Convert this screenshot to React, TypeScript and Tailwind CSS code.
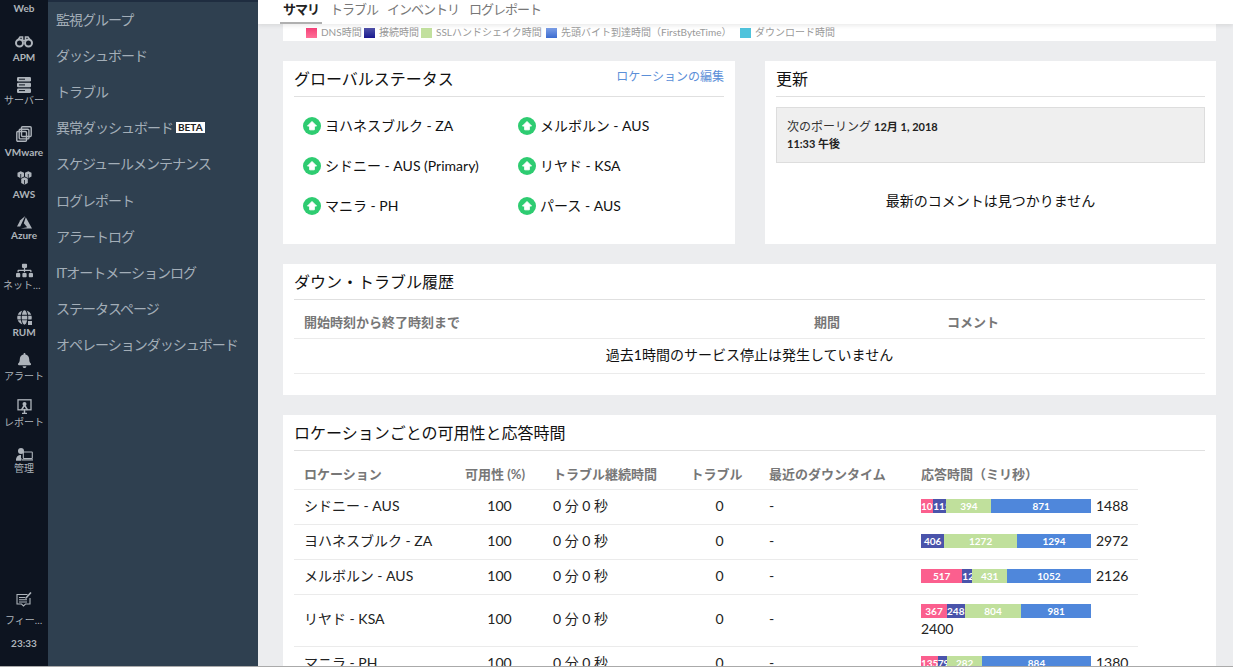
import { FaBell, FaGlobe, FaSitemap } from "react-icons/fa";

const font = "font-['Lato','Noto_Sans_CJK_JP',sans-serif]";

const ApmIcon = () => (
  <svg width="18" height="12" viewBox="0 0 18 12" fill="none" stroke="currentColor">
    <circle cx="4.500" cy="7" r="3.500" strokeWidth="2" />
    <circle cx="13.500" cy="7" r="3.500" strokeWidth="2" />
    <path d="M3 4 5 1H7.500V5M15 4 13 1H10.500V5M7.500 4.500H10.500" strokeWidth="1.600" />
  </svg>
);

const ServerIcon = () => (
  <svg width="14" height="16" viewBox="0 0 14 16" fill="currentColor">
    <rect x="0" y="0" width="14" height="4.500" rx="1.200" />
    <rect x="0" y="5.700" width="14" height="4.500" rx="1.200" />
    <rect x="0" y="11.400" width="14" height="4.500" rx="1.200" />
    <rect x="2" y="1.700" width="6" height="1" fill="#0d1420" />
    <rect x="2" y="7.400" width="6" height="1" fill="#0d1420" />
    <rect x="2" y="13.100" width="6" height="1" fill="#0d1420" />
  </svg>
);

const VmwareIcon = () => (
  <svg width="16" height="16" viewBox="0 0 16 16" fill="none" stroke="currentColor" strokeWidth="1.400">
    <rect x="5.500" y="0.800" width="9.700" height="9.700" rx="1" />
    <rect x="3.200" y="3.200" width="9.700" height="9.700" rx="1" />
    <rect x="0.800" y="5.500" width="9.700" height="9.700" rx="1" />
  </svg>
);

const AwsIcon = () => (
  <svg width="15" height="14" viewBox="0 0 15 14" fill="currentColor">
    <path d="M0.500 1.800 3.700 0.200 7 1.800V5.600L3.700 7.200 0.500 5.600Z" />
    <path d="M8 1.800 11.300 0.200 14.500 1.800V5.600L11.300 7.200 8 5.600Z" />
    <path d="M4.200 7.800 7.500 6.200 10.800 7.800V12L7.500 13.800 4.200 12Z" />
    <path d="M3.700 3V7M11.300 3V7M7.500 9V13.500" stroke="#0d1420" strokeWidth="0.800" />
  </svg>
);

const AzureIcon = () => (
  <svg width="15" height="13" viewBox="0 0 15 13" fill="currentColor">
    <path d="M8.200 0 3.300 4.300 0 10.500H3.200Z" />
    <path d="M8.800 1.200 15 12.500H3.800L10.200 11.300 6.800 7.300Z" />
  </svg>
);

const ReportIcon = () => (
  <svg width="15" height="15" viewBox="0 0 15 15" fill="none" stroke="currentColor">
    <rect x="1" y="0.800" width="13" height="10" strokeWidth="1.300" />
    <circle cx="7.500" cy="5" r="2" fill="currentColor" stroke="none" />
    <path d="M4.500 11 7.500 6 10.500 11M7.500 10V14M5 14.500H10" strokeWidth="1.500" />
  </svg>
);

const AdminIcon = () => (
  <svg width="17" height="13" viewBox="0 0 17 13" fill="currentColor">
    <circle cx="5" cy="3" r="3" />
    <path d="M0 12.500C0 8.500 2 7 5 7V12.500Z" />
    <path d="M3.500 10H5.500V12.500H0V11Z" />
    <rect x="7.300" y="4" width="9" height="6.500" rx="0.500" fill="none" stroke="currentColor" strokeWidth="1.100" />
    <rect x="6" y="11.300" width="11" height="1.200" />
  </svg>
);

const FeedbackIcon = () => (
  <svg width="16" height="16" viewBox="0 0 16 16" fill="none" stroke="currentColor" strokeWidth="1.100">
    <path d="M11.500 2.500H1V12H5.500L7.500 14 9.500 12H14V6" />
    <path d="M3 5.500H9M3 7.800H11M3 10H11" />
    <path d="M9.500 6.500 15 0.500" strokeWidth="1.600" />
  </svg>
);

const RumIcon = () => (
  <div className="relative">
    <FaGlobe size={15} />
    <span className="absolute -right-[1px] -bottom-[1px] w-[6px] h-[6px] bg-[#aeb4bb] border border-[#0d1420]" />
  </div>
);

const railItems = [
  { label: "APM", bold: true, top: "mt-[20px]", gap: "mt-0", icon: <ApmIcon /> },
  { label: "サーバー", bold: false, top: "mt-[13px]", gap: "mt-0", icon: <ServerIcon /> },
  { label: "VMware", bold: true, top: "mt-[19px]", gap: "mt-[3px]", icon: <VmwareIcon /> },
  { label: "AWS", bold: true, top: "mt-[11px]", gap: "mt-[1px]", icon: <AwsIcon /> },
  { label: "Azure", bold: true, top: "mt-[13px]", gap: "-mt-[2px]", icon: <AzureIcon /> },
  { label: "ネットワーク", bold: false, top: "mt-[20px]", gap: "mt-0", icon: <FaSitemap size={17} /> },
  { label: "RUM", bold: true, top: "mt-[17px]", gap: "mt-0", icon: <RumIcon /> },
  { label: "アラート", bold: false, top: "mt-[13px]", gap: "mt-[1px]", icon: <FaBell size={15} /> },
  { label: "レポート", bold: false, top: "mt-[15px]", gap: "mt-[1px]", icon: <ReportIcon /> },
  { label: "管理", bold: false, top: "mt-[17px]", gap: "-mt-[1px]", icon: <AdminIcon /> },
];

const subNav = [
  "監視グループ",
  "ダッシュボード",
  "トラブル",
  "異常ダッシュボード",
  "スケジュールメンテナンス",
  "ログレポート",
  "アラートログ",
  "ITオートメーションログ",
  "ステータスページ",
  "オペレーションダッシュボード",
];

const legend = [
  { color: "bg-gradient-to-b from-[#f43f78] to-[#ff6f98]", label: "DNS時間", box: "w-[58px]" },
  { color: "bg-gradient-to-b from-[#5050a8] to-[#1c1690]", label: "接続時間", box: "w-[57px]" },
  { color: "bg-[#c2e09e]", label: "SSLハンドシェイク時間", box: "w-[125px]" },
  { color: "bg-gradient-to-b from-[#7c9ee6] to-[#3c6cd0]", label: "先頭バイト到達時間（FirstByteTime）", box: "w-[194px]" },
  { color: "bg-[#4fc3dc]", label: "ダウンロード時間", box: "w-[95px]" },
];

const statuses = [
  "ヨハネスブルク - ZA",
  "メルボルン - AUS",
  "シドニー - AUS (Primary)",
  "リヤド - KSA",
  "マニラ - PH",
  "パース - AUS",
];

const rows = [
  { name: "シドニー - AUS", parts: [107, 115, 394, 871], total: 1488, wrap: false },
  { name: "ヨハネスブルク - ZA", parts: [0, 406, 1272, 1294], total: 2972, wrap: false },
  { name: "メルボルン - AUS", parts: [517, 126, 431, 1052], total: 2126, wrap: false },
  { name: "リヤド - KSA", parts: [367, 248, 804, 981], total: 2400, wrap: true },
  { name: "マニラ - PH", parts: [135, 79, 282, 884], total: 1380, wrap: false },
];

const barColors = ["bg-[#fb5f8e]", "bg-[#4a54ab]", "bg-[#c0e09c]", "bg-[#4f87db]"];
const columns = "grid grid-cols-[162px_87px_137px_79px_152px_227px] items-center";

function UpIcon() {
  return (
    <svg width="18" height="18" viewBox="0 0 18 18" className="shrink-0">
      <circle cx="9" cy="9" r="9" fill="#2ecc71" />
      <path d="M9 4.500 13.500 9H11.300V12.800H6.700V9H4.500Z" fill="#fff" stroke="#fff" strokeLinejoin="round" />
    </svg>
  );
}

function CardTitle({ children }: { children: React.ReactNode }) {
  return <h2 className="text-[16px] leading-[35px] h-[36px] text-[#111] border-b border-[#e0e0e0]">{children}</h2>;
}

function Rail() {
  return (
    <aside className="w-12 shrink-0 bg-[#0d1420] text-[#aeb4bb] flex flex-col items-center overflow-hidden">
      <div className="text-[10px] font-bold leading-[12px] mt-[2px]">Web</div>
      {railItems.map((item) => (
        <div key={item.label} className={`${item.top} flex flex-col items-center w-full`}>
          <div className="h-[16px] flex items-center justify-center">{item.icon}</div>
          <div className={`w-[42px] text-center truncate leading-[14px] text-[10px] ${item.gap} ${item.bold ? "font-bold" : ""}`}>
            {item.label}
          </div>
        </div>
      ))}
      <div className="mt-auto flex flex-col items-center w-full pb-[17px]">
        <FeedbackIcon />
        <div className="w-[38px] text-center truncate text-[10px] leading-[14px] mt-[5px]">フィードバック</div>
        <div className="text-[10px] font-bold leading-[12px] mt-[10px]">23:33</div>
      </div>
    </aside>
  );
}

function SubNav() {
  return (
    <nav className="w-[210px] shrink-0 bg-[#2f4050] text-[#a3aeb8]">
      <div className="h-[2px] bg-[#1f2d40]" />
      <ul className="pl-2 -mt-[0.500px]">
        {subNav.map((item) => (
          <li key={item} className="h-[36.100px] flex items-center text-[14px] tracking-[-1px] whitespace-nowrap">
            {item}
            {item === "異常ダッシュボード" && (
              <span className="ml-[3px] bg-white text-[#222] text-[10px] font-bold px-[2px] leading-[11px] tracking-normal">
                BETA
              </span>
            )}
          </li>
        ))}
      </ul>
    </nav>
  );
}

function Tabs() {
  return (
    <div className="h-6 shrink-0 bg-white shadow-[0_2px_4px_rgba(0,0,0,0.08)] relative z-10 flex pl-[22px] text-[13px] tracking-[-1px] text-[#777]">
      <div className="h-6 w-[42px] border-b-2 border-[#b0b0b0] text-center font-bold text-[#222] leading-[19px]">サマリ</div>
      <div className="ml-2 leading-[19px]">トラブル</div>
      <div className="ml-[9px] leading-[19px]">インベントリ</div>
      <div className="ml-[10px] leading-[19px]">ログレポート</div>
    </div>
  );
}

function App() {
  return (
    <div className={`${font} flex h-[666px] w-full overflow-hidden`}>
      <Rail />
      <SubNav />
      <main className="flex-1 min-w-0 bg-[#ecedef] flex flex-col overflow-hidden">
        <Tabs />
        <div className="pl-[25px] pr-[17px] flex flex-col gap-5 overflow-hidden">
          <section className="bg-white h-[17px] shrink-0 pl-[23px] flex items-center text-[10px] text-[#999] whitespace-nowrap">
            {legend.map((l) => (
              <div key={l.label} className={`${l.box} flex items-center gap-[4px]`}>
                <span className={`${l.color} w-[11px] h-[10px] shrink-0`} />
                {l.label}
              </div>
            ))}
          </section>

          <div className="flex gap-[30px] shrink-0">
            <section className="bg-white w-[452px] h-[183px] px-[11px] shrink-0">
              <div className="relative">
                <CardTitle>グローバルステータス</CardTitle>
                <a className="absolute right-0 top-0 text-[12px] leading-[31px] text-[#5b8fd8]">ロケーションの編集</a>
              </div>
              <div className="grid grid-cols-[215px_1fr] auto-rows-[40px] pl-[9px] pt-[9px] text-[14px] text-[#111]">
                {statuses.map((s) => (
                  <div key={s} className="flex items-center gap-1 whitespace-nowrap">
                    <UpIcon />
                    <span className="-mt-[2px]">{s}</span>
                  </div>
                ))}
              </div>
            </section>

            <section className="bg-white flex-1 h-[183px] px-[11px]">
              <CardTitle>更新</CardTitle>
              <div className="mt-[10px] h-[56px] bg-[#efefef] border border-[#dddddd] px-[10px] pt-[10px] text-[12px] leading-[17px] text-[#333]">
                次のポーリング <b className="text-[11px] text-[#222]">12月 1, 2018</b>
                <br />
                <b className="text-[11px] text-[#222]">11:33 午後</b>
              </div>
              <p className="text-center text-[14px] text-[#111] mt-[28px] leading-[20px]">最新のコメントは見つかりません</p>
            </section>
          </div>

          <section className="bg-white h-[131px] shrink-0 px-[11px]">
            <CardTitle>ダウン・トラブル履歴</CardTitle>
            <div className="grid grid-cols-[510px_133px_1fr] h-[39px] items-center pt-[8px] border-b border-[#ebebeb] text-[13px] font-bold text-[#777] pl-[10px]">
              <div>開始時刻から終了時刻まで</div>
              <div>期間</div>
              <div>コメント</div>
            </div>
            <div className="h-[35px] pb-[4px] flex items-center justify-center border-b border-[#ebebeb] text-[14px] text-[#111]">
              過去1時間のサービス停止は発生していません
            </div>
          </section>

          <section className="bg-white px-[11px] h-[260px] shrink-0">
            <CardTitle>ロケーションごとの可用性と応答時間</CardTitle>
            <div className="w-[844px]">
              <div className={`${columns} h-[39px] pt-[9px] border-b border-[#ebebeb] text-[13px] font-bold text-[#777]`}>
                <div className="pl-[10px]">ロケーション</div>
                <div className="text-center pr-[9px]">可用性 (%)</div>
                <div className="pl-[10px]">トラブル継続時間</div>
                <div className="text-center pr-[6px]">トラブル</div>
                <div className="pl-[10px]">最近のダウンタイム</div>
                <div className="pl-[10px]">応答時間（ミリ秒）</div>
              </div>
              {rows.map((row) => (
                <div
                  key={row.name}
                  className={`${columns} ${row.wrap ? "h-[52px]" : "h-[35px]"} pb-[4px] border-b border-[#ebebeb] text-[14px] text-[#222]`}
                >
                  <div className="pl-[10px] whitespace-nowrap">{row.name}</div>
                  <div className="text-center">100</div>
                  <div className="pl-[10px]">0 分 0 秒</div>
                  <div className="text-center">0</div>
                  <div className="pl-[10px]">-</div>
                  <div className={`pl-[10px] flex ${row.wrap ? "flex-col pt-[2px]" : "items-center gap-[5px]"}`}>
                    <div className="flex w-[170px] h-[14px] mt-[2px] shrink-0">
                      {row.parts.map((p, i) =>
                        p > 0 ? (
                          <span
                            key={i}
                            className={`${barColors[i]} overflow-hidden whitespace-nowrap text-center text-[10px] font-bold leading-[14px] text-white`}
                            style={{ width: `${(p / row.parts.reduce((a, b) => a + b, 0)) * 170}px` }}
                          >
                            {p}
                          </span>
                        ) : null,
                      )}
                    </div>
                    <div className={row.wrap ? "leading-[19px] mt-[1px]" : ""}>{row.total}</div>
                  </div>
                </div>
              ))}
            </div>
          </section>
        </div>
      </main>
    </div>
  );
}

export default function Root() {
  return (
    <div className="h-[667px] overflow-hidden border-b border-[#aaaaaa]">
      <App />
    </div>
  );
}
